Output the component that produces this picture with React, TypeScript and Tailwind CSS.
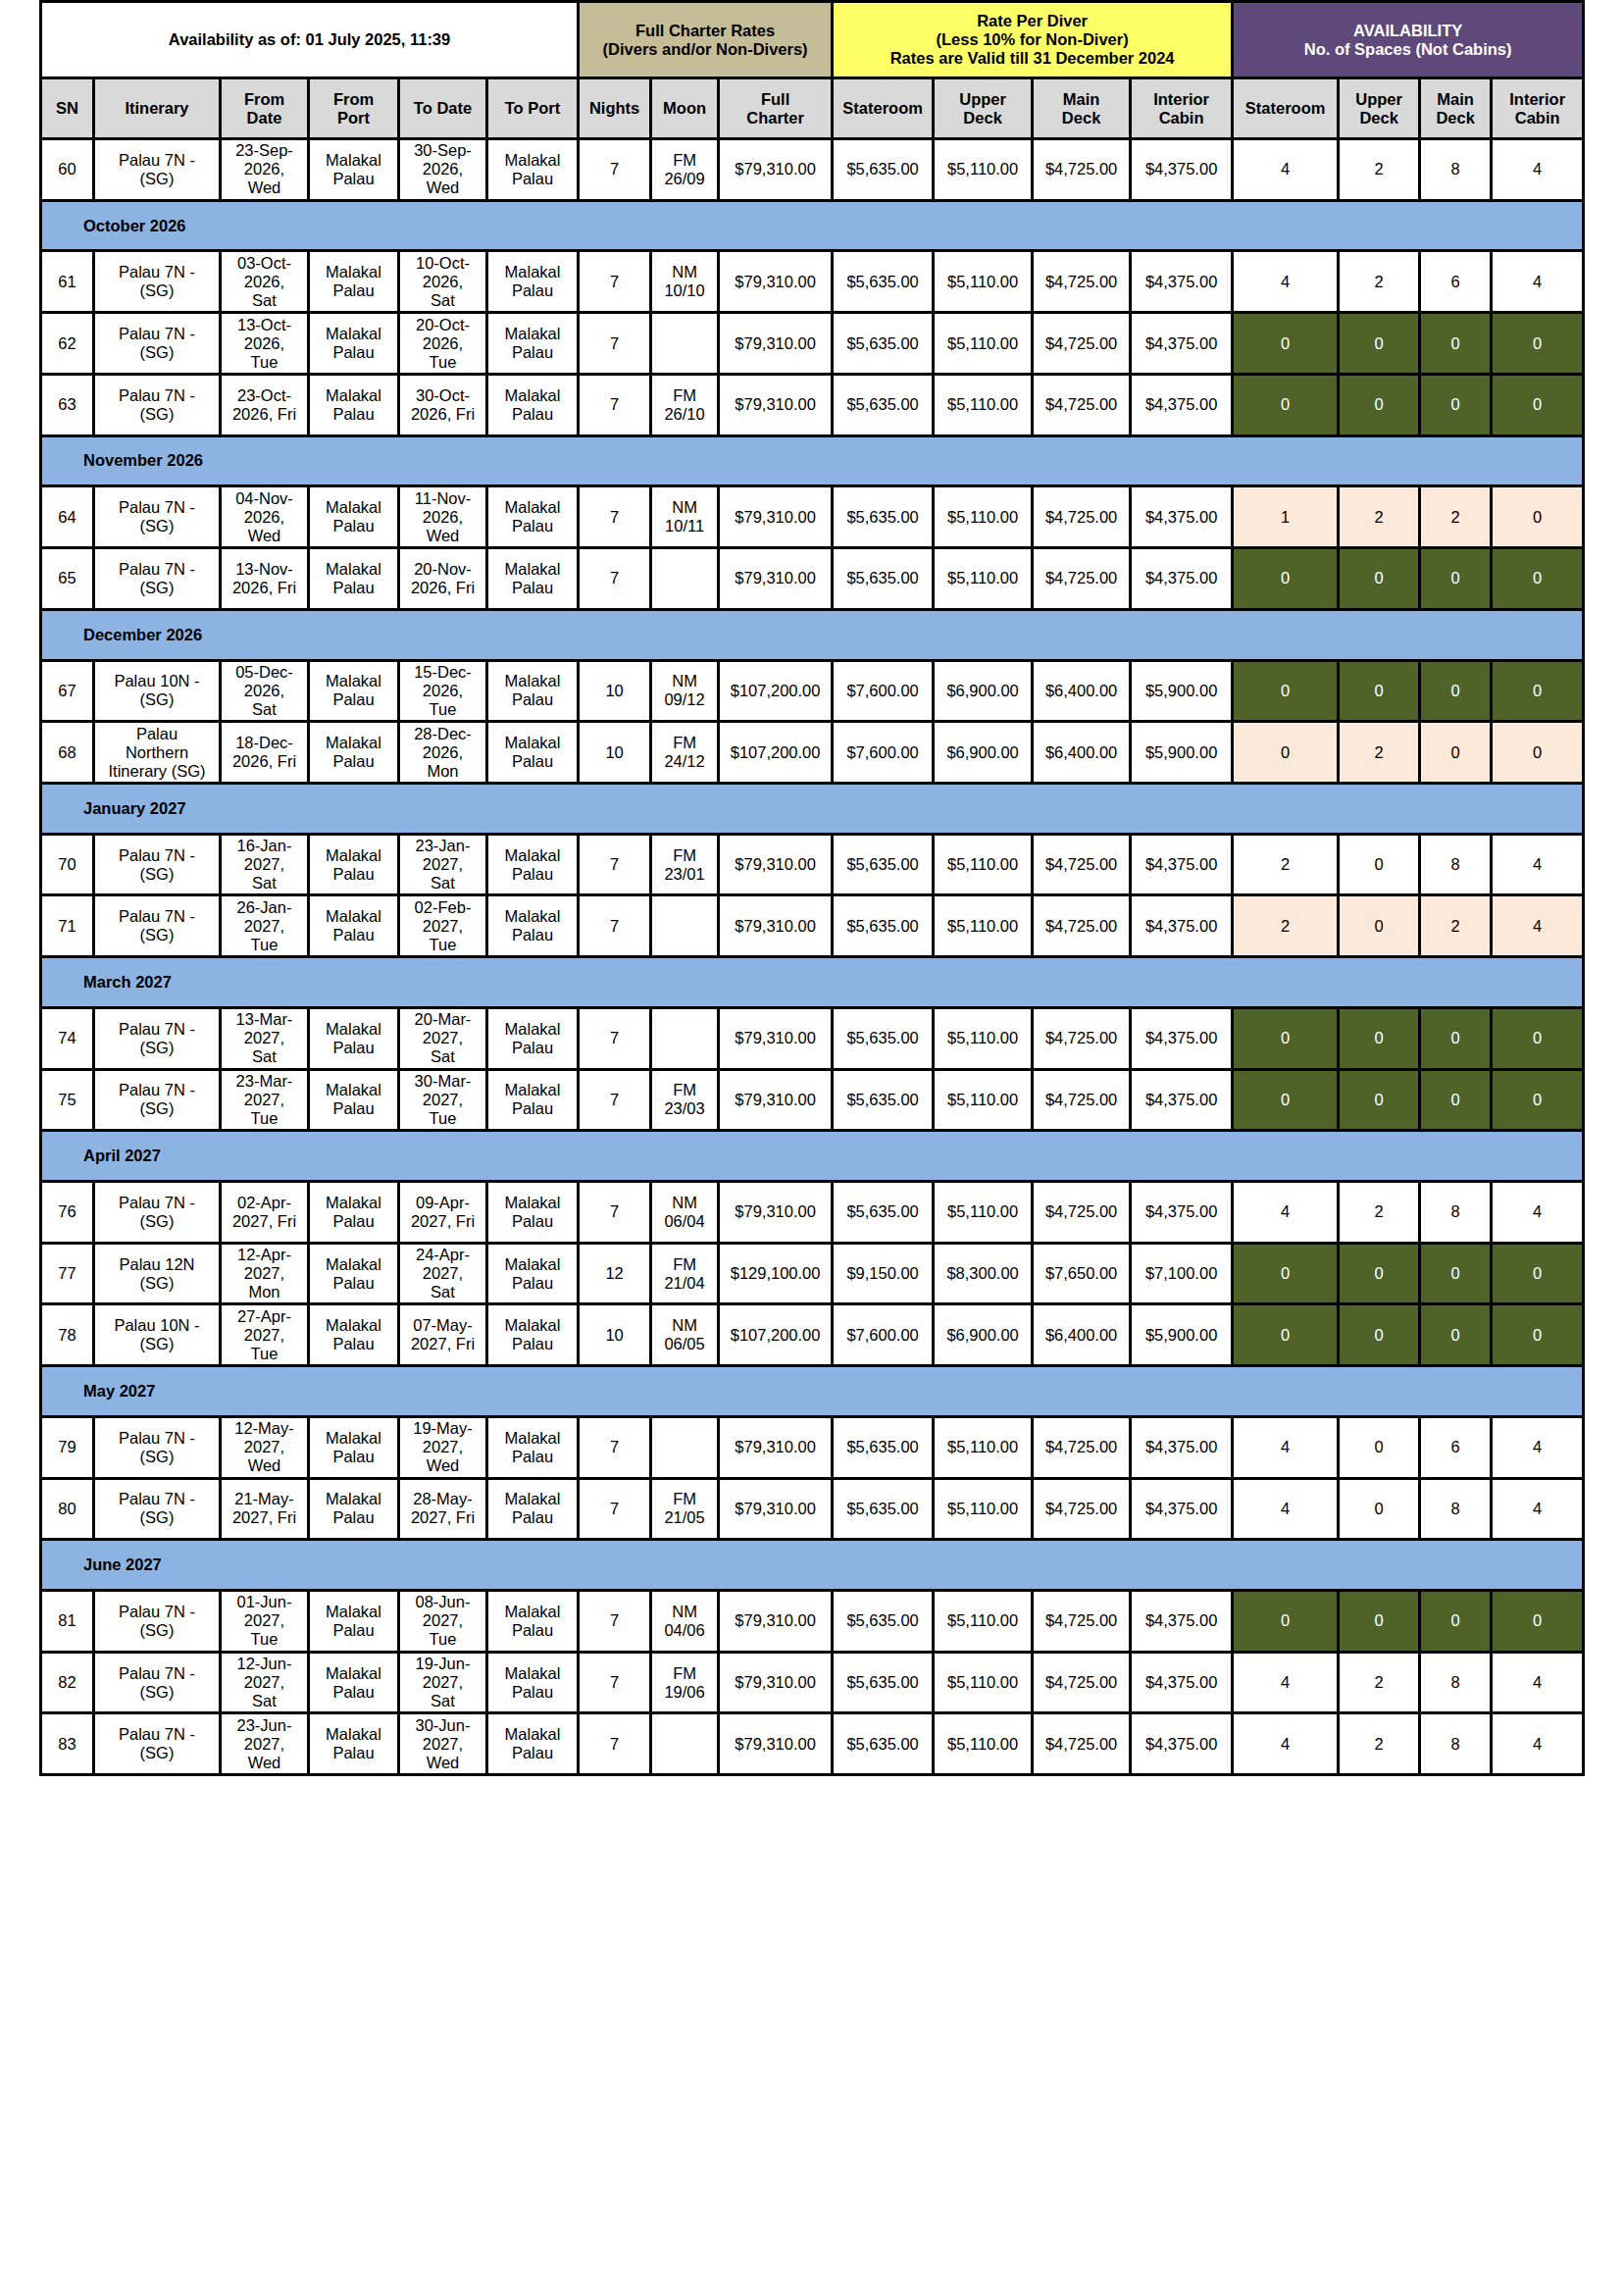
import React from "react";

type Tone = "open" | "full" | "low";

type Trip = {
  sn: number;
  itin: string[];
  from: string;
  to: string;
  nights: number;
  moon?: string[];
  rates: string[];
  avail: number[];
  tone: Tone;
};

const R7 = ["$79,310.00", "$5,635.00", "$5,110.00", "$4,725.00", "$4,375.00"];
const R10 = ["$107,200.00", "$7,600.00", "$6,900.00", "$6,400.00", "$5,900.00"];
const R12 = ["$129,100.00", "$9,150.00", "$8,300.00", "$7,650.00", "$7,100.00"];

const P7 = ["Palau 7N -", "(SG)"];
const P10 = ["Palau 10N -", "(SG)"];
const FULL = [0, 0, 0, 0];

const sections: { month?: string; trips: Trip[] }[] = [
  {
    trips: [
      { sn: 60, itin: P7, from: "23-Sep-2026, Wed", to: "30-Sep-2026, Wed", nights: 7, moon: ["FM", "26/09"], rates: R7, avail: [4, 2, 8, 4], tone: "open" },
    ],
  },
  {
    month: "October 2026",
    trips: [
      { sn: 61, itin: P7, from: "03-Oct-2026, Sat", to: "10-Oct-2026, Sat", nights: 7, moon: ["NM", "10/10"], rates: R7, avail: [4, 2, 6, 4], tone: "open" },
      { sn: 62, itin: P7, from: "13-Oct-2026, Tue", to: "20-Oct-2026, Tue", nights: 7, rates: R7, avail: FULL, tone: "full" },
      { sn: 63, itin: P7, from: "23-Oct-2026, Fri", to: "30-Oct-2026, Fri", nights: 7, moon: ["FM", "26/10"], rates: R7, avail: FULL, tone: "full" },
    ],
  },
  {
    month: "November 2026",
    trips: [
      { sn: 64, itin: P7, from: "04-Nov-2026, Wed", to: "11-Nov-2026, Wed", nights: 7, moon: ["NM", "10/11"], rates: R7, avail: [1, 2, 2, 0], tone: "low" },
      { sn: 65, itin: P7, from: "13-Nov-2026, Fri", to: "20-Nov-2026, Fri", nights: 7, rates: R7, avail: FULL, tone: "full" },
    ],
  },
  {
    month: "December 2026",
    trips: [
      { sn: 67, itin: P10, from: "05-Dec-2026, Sat", to: "15-Dec-2026, Tue", nights: 10, moon: ["NM", "09/12"], rates: R10, avail: FULL, tone: "full" },
      { sn: 68, itin: ["Palau", "Northern", "Itinerary (SG)"], from: "18-Dec-2026, Fri", to: "28-Dec-2026, Mon", nights: 10, moon: ["FM", "24/12"], rates: R10, avail: [0, 2, 0, 0], tone: "low" },
    ],
  },
  {
    month: "January 2027",
    trips: [
      { sn: 70, itin: P7, from: "16-Jan-2027, Sat", to: "23-Jan-2027, Sat", nights: 7, moon: ["FM", "23/01"], rates: R7, avail: [2, 0, 8, 4], tone: "open" },
      { sn: 71, itin: P7, from: "26-Jan-2027, Tue", to: "02-Feb-2027, Tue", nights: 7, rates: R7, avail: [2, 0, 2, 4], tone: "low" },
    ],
  },
  {
    month: "March 2027",
    trips: [
      { sn: 74, itin: P7, from: "13-Mar-2027, Sat", to: "20-Mar-2027, Sat", nights: 7, rates: R7, avail: FULL, tone: "full" },
      { sn: 75, itin: P7, from: "23-Mar-2027, Tue", to: "30-Mar-2027, Tue", nights: 7, moon: ["FM", "23/03"], rates: R7, avail: FULL, tone: "full" },
    ],
  },
  {
    month: "April 2027",
    trips: [
      { sn: 76, itin: P7, from: "02-Apr-2027, Fri", to: "09-Apr-2027, Fri", nights: 7, moon: ["NM", "06/04"], rates: R7, avail: [4, 2, 8, 4], tone: "open" },
      { sn: 77, itin: ["Palau 12N", "(SG)"], from: "12-Apr-2027, Mon", to: "24-Apr-2027, Sat", nights: 12, moon: ["FM", "21/04"], rates: R12, avail: FULL, tone: "full" },
      { sn: 78, itin: P10, from: "27-Apr-2027, Tue", to: "07-May-2027, Fri", nights: 10, moon: ["NM", "06/05"], rates: R10, avail: FULL, tone: "full" },
    ],
  },
  {
    month: "May 2027",
    trips: [
      { sn: 79, itin: P7, from: "12-May-2027, Wed", to: "19-May-2027, Wed", nights: 7, rates: R7, avail: [4, 0, 6, 4], tone: "open" },
      { sn: 80, itin: P7, from: "21-May-2027, Fri", to: "28-May-2027, Fri", nights: 7, moon: ["FM", "21/05"], rates: R7, avail: [4, 0, 8, 4], tone: "open" },
    ],
  },
  {
    month: "June 2027",
    trips: [
      { sn: 81, itin: P7, from: "01-Jun-2027, Tue", to: "08-Jun-2027, Tue", nights: 7, moon: ["NM", "04/06"], rates: R7, avail: FULL, tone: "full" },
      { sn: 82, itin: P7, from: "12-Jun-2027, Sat", to: "19-Jun-2027, Sat", nights: 7, moon: ["FM", "19/06"], rates: R7, avail: [4, 2, 8, 4], tone: "open" },
      { sn: 83, itin: P7, from: "23-Jun-2027, Wed", to: "30-Jun-2027, Wed", nights: 7, rates: R7, avail: [4, 2, 8, 4], tone: "open" },
    ],
  },
];

// "23-Sep-2026, Wed" -> lines as the cell wraps them ("Fri" fits beside the year)
function dateLines(s: string) {
  const [dmy, day] = s.split(", ");
  const head = dmy.slice(0, 7);
  const year = dmy.slice(7);
  return day === "Fri" ? [head, `${year}, Fri`] : [head, `${year},`, day];
}

function Lines({ lines }: { lines: string[] }) {
  return (
    <>
      {lines.map((l, i) => (
        <div key={i}>{l}</div>
      ))}
    </>
  );
}

const cell = "border-[3px] border-black text-center align-middle px-1";
const head = `${cell} bg-[#d9d9d9] font-bold`;

const toneCls: Record<Tone, string> = {
  open: "bg-white text-black",
  full: "bg-[#4f6228] text-white",
  low: "bg-[#fde9d9] text-black",
};

export default function App() {
  return (
    <div className="min-h-[2339px] w-full bg-white pl-[40px] font-['Liberation_Sans',Arial,sans-serif] text-[16.5px] leading-[19px] text-black">
      <table className="w-[1573px] table-fixed border-collapse">
        <colgroup>
          <col className="w-[54px]" />
          <col className="w-[129px]" />
          <col className="w-[90px]" />
          <col className="w-[92px]" />
          <col className="w-[90px]" />
          <col className="w-[93px]" />
          <col className="w-[74px]" />
          <col className="w-[69px]" />
          <col className="w-[116px]" />
          <col className="w-[103px]" />
          <col className="w-[101px]" />
          <col className="w-[100px]" />
          <col className="w-[104px]" />
          <col className="w-[108px]" />
          <col className="w-[83px]" />
          <col className="w-[73px]" />
          <col className="w-[94px]" />
        </colgroup>
        <thead>
          <tr className="h-[78px]">
            <th colSpan={6} className={`${cell} bg-white font-bold`}>
              Availability as of: 01 July 2025, 11:39
            </th>
            <th colSpan={3} className={`${cell} bg-[#c4bd97] font-bold`}>
              <div>Full Charter Rates</div>
              <div>(Divers and/or Non-Divers)</div>
            </th>
            <th colSpan={4} className={`${cell} bg-[#ffff66] font-bold`}>
              <div>Rate Per Diver</div>
              <div>(Less 10% for Non-Diver)</div>
              <div>Rates are Valid till 31 December 2024</div>
            </th>
            <th colSpan={4} className={`${cell} bg-[#5f497a] font-bold text-white`}>
              <div>AVAILABILITY</div>
              <div>No. of Spaces (Not Cabins)</div>
            </th>
          </tr>
          <tr className="h-[62px]">
            <th className={head}>SN</th>
            <th className={head}>Itinerary</th>
            <th className={head}><Lines lines={["From", "Date"]} /></th>
            <th className={head}><Lines lines={["From", "Port"]} /></th>
            <th className={head}>To Date</th>
            <th className={head}>To Port</th>
            <th className={head}>Nights</th>
            <th className={head}>Moon</th>
            <th className={head}><Lines lines={["Full", "Charter"]} /></th>
            <th className={head}>Stateroom</th>
            <th className={head}><Lines lines={["Upper", "Deck"]} /></th>
            <th className={head}><Lines lines={["Main", "Deck"]} /></th>
            <th className={head}><Lines lines={["Interior", "Cabin"]} /></th>
            <th className={head}>Stateroom</th>
            <th className={head}><Lines lines={["Upper", "Deck"]} /></th>
            <th className={head}><Lines lines={["Main", "Deck"]} /></th>
            <th className={head}><Lines lines={["Interior", "Cabin"]} /></th>
          </tr>
        </thead>
        <tbody>
          {sections.map((sec, si) => (
            <React.Fragment key={si}>
              {sec.month && (
                <tr className="h-[51.8px]">
                  <td colSpan={17} className="border-[3px] border-black bg-[#8db3e2] pl-[42px] align-middle font-bold">
                    {sec.month}
                  </td>
                </tr>
              )}
              {sec.trips.map((t) => (
                <tr key={t.sn} className="h-[62.7px]">
                  <td className={cell}>{t.sn}</td>
                  <td className={cell}><Lines lines={t.itin} /></td>
                  <td className={cell}><Lines lines={dateLines(t.from)} /></td>
                  <td className={cell}><Lines lines={["Malakal", "Palau"]} /></td>
                  <td className={cell}><Lines lines={dateLines(t.to)} /></td>
                  <td className={cell}><Lines lines={["Malakal", "Palau"]} /></td>
                  <td className={cell}>{t.nights}</td>
                  <td className={cell}>{t.moon && <Lines lines={t.moon} />}</td>
                  {t.rates.map((r, i) => (
                    <td key={i} className={cell}>{r}</td>
                  ))}
                  {t.avail.map((a, i) => (
                    <td key={i} className={`${cell} ${toneCls[t.tone]}`}>{a}</td>
                  ))}
                </tr>
              ))}
            </React.Fragment>
          ))}
        </tbody>
      </table>
    </div>
  );
}
